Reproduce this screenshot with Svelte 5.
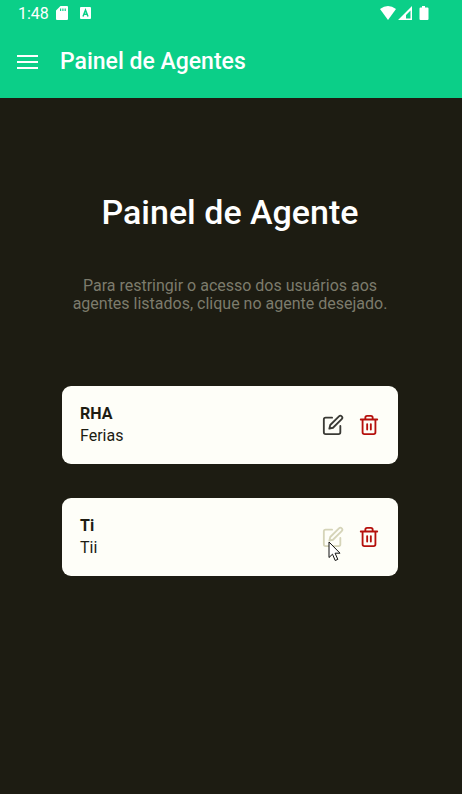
<script>
  const agents = [
    { name: 'RHA', detail: 'Ferias', pressed: false },
    { name: 'Ti', detail: 'Tii', pressed: true }
  ];
</script>

<div class="screen">
  <header>
    <div class="status">
      <span>1:48</span>
      <svg class="sd" width="12" height="14" viewBox="0 0 12 14" aria-hidden="true">
        <path fill="#fff" fill-rule="evenodd" d="M4.500 0H11a1 1 0 0 1 1 1v12a1 1 0 0 1-1 1H1a1 1 0 0 1-1-1V4.500ZM4 2.500V5h1.200V2.500ZM6.300 2.500V5h1.200V2.500ZM8.600 2.500V5h1.200V2.500Z" />
      </svg>
      <svg class="debug" width="11" height="12" viewBox="0 0 11 12" aria-hidden="true">
        <rect width="11" height="12" rx="1" fill="#fff" />
        <path d="M3 9.500 5.500 3 8 9.500M4 7.300h3" fill="none" stroke="#0bcf88" stroke-width="1.500" />
      </svg>
      <svg class="signals" width="50" height="16" viewBox="0 0 50 16" aria-hidden="true">
        <path fill="#fff" d="M0 4Q8-2 16 4L8 15Z" />
        <path fill="#fff" fill-rule="evenodd" d="M32 1v14H18ZM30.500 5.500 26 10v3.500h4.500Z" />
        <path fill="#fff" d="M42 1h3v1.500h2.500a1 1 0 0 1 1 1V14a1 1 0 0 1-1 1h-7a1 1 0 0 1-1-1V3.500a1 1 0 0 1 1-1H42Z" />
      </svg>
    </div>
    <div class="bar">
      <button class="menu" aria-label="Menu">
        <svg width="21" height="14" viewBox="0 0 21 14"><path fill="#fff" d="M0 0h21v2H0zM0 6h21v2H0zM0 12h21v2H0z" /></svg>
      </button>
      <span class="title">Painel de Agentes</span>
    </div>
  </header>

  <main>
    <h1>Painel de Agente</h1>
    <p class="intro">Para restringir o acesso dos usuários aos agentes listados, clique no agente desejado.</p>
    <div class="list">
      {#each agents as agent}
        <article>
          <div class="info">
            <strong>{agent.name}</strong>
            <span>{agent.detail}</span>
          </div>
          <button class="edit" class:pressed={agent.pressed} aria-label="Editar {agent.name}">
            <svg width="22" height="22" viewBox="0 0 24 24" fill="none" stroke="currentColor" stroke-width="2" stroke-linecap="round" stroke-linejoin="round">
              <path d="M11 4H4a2 2 0 0 0-2 2v14a2 2 0 0 0 2 2h14a2 2 0 0 0 2-2v-7" />
              <path d="M18.500 2.500a2.121 2.121 0 0 1 3 3L12 15l-4 1 1-4Z" />
            </svg>
          </button>
          <button class="remove" aria-label="Excluir {agent.name}">
            <svg width="22" height="22" viewBox="0 0 24 24" fill="none" stroke="currentColor" stroke-width="2" stroke-linecap="round" stroke-linejoin="round">
              <path d="M3 6h18M19 6v14a2 2 0 0 1-2 2H7a2 2 0 0 1-2-2V6M8 6V4a2 2 0 0 1 2-2h4a2 2 0 0 1 2 2v2M10 11v6M14 11v6" />
            </svg>
          </button>
          {#if agent.pressed}
            <svg class="cursor" width="14" height="21" viewBox="0 0 14 21" aria-hidden="true">
              <path fill="#fff" stroke="#111" d="M1 1v15.500l3.500-3.300 2.700 6.300 2.600-1.100-2.700-6.200H12Z" />
            </svg>
          {/if}
        </article>
      {/each}
    </div>
  </main>
</div>

<style>
  :global(body) {
    margin: 0;
    background: #1d1c12;
  }
  .screen {
    min-height: 100vh;
    box-sizing: border-box;
    background: #1d1c12;
    color: #fff;
    font-family: Roboto, 'Liberation Sans', sans-serif;
  }
  header {
    background: #0bcf88;
  }
  .status {
    display: flex;
    align-items: center;
    height: 26px;
    padding: 0 32px 0 18px;
    font-size: 16px;
  }
  .sd {
    margin-left: 7px;
  }
  .debug {
    margin-left: 12px;
  }
  .signals {
    margin-left: auto;
  }
  .bar {
    display: flex;
    align-items: center;
    gap: 22px;
    height: 72px;
    padding: 0 17px;
  }
  .title {
    font-size: 23px;
    line-height: 28px;
    font-weight: 500;
  }
  button {
    display: flex;
    padding: 0;
    border: 0;
    background: none;
    cursor: pointer;
  }
  main {
    padding: 92px 64px 40px 62px;
  }
  h1 {
    margin: 0;
    font-size: 34px;
    line-height: 44px;
    font-weight: 500;
    text-align: center;
  }
  .intro {
    margin: 43px 0 0;
    font-size: 16px;
    line-height: 18px;
    text-align: center;
    color: #7c7b6c;
  }
  .list {
    display: flex;
    flex-direction: column;
    gap: 34px;
    margin-top: 73px;
  }
  article {
    position: relative;
    display: flex;
    align-items: center;
    gap: 14px;
    padding: 17px 18px;
    border-radius: 9px;
    background: #fefef8;
  }
  .info {
    display: flex;
    flex: 1;
    flex-direction: column;
    font-size: 16px;
    line-height: 22px;
    color: #1d1c12;
  }
  .info strong {
    font-weight: 700;
  }
  .edit {
    color: #3a3a35;
  }
  .edit.pressed {
    color: #d5d4b8;
  }
  .remove {
    color: #b5100c;
  }
  .cursor {
    position: absolute;
    right: 56px;
    top: 43px;
  }
</style>
